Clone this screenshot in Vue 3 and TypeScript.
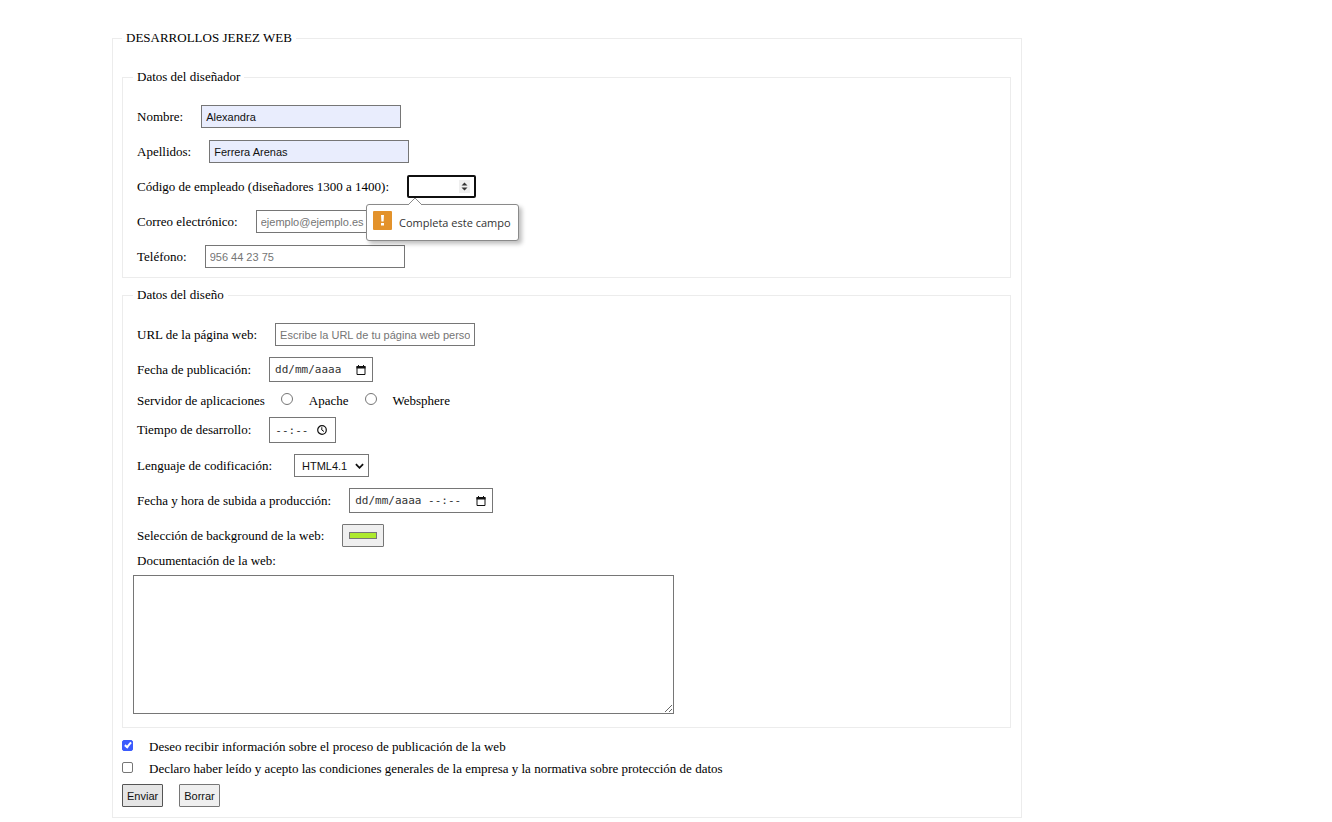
<script setup lang="ts">
import { ref } from 'vue'

const nombre = ref('Alexandra')
const apellidos = ref('Ferrera Arenas')
const codigo = ref('')
const correo = ref('')
const telefono = ref('')
const url = ref('')
const fecha = ref('')
const servidor = ref('')
const tiempo = ref('')
const lenguaje = ref('HTML4.1')
const subida = ref('')
const fondo = ref('#adea2e')
const documentacion = ref('')
const recibir = ref(true)
const acepto = ref(false)
</script>

<template>
  <form class="page" novalidate @submit.prevent>
    <fieldset class="outer">
      <legend>DESARROLLOS JEREZ WEB</legend>

      <fieldset class="group">
        <legend>Datos del diseñador</legend>
        <div class="rows">
          <div class="row">
            <label for="nombre">Nombre:</label>
            <input id="nombre" v-model="nombre" class="field filled" type="text" />
          </div>
          <div class="row">
            <label for="apellidos">Apellidos:</label>
            <input id="apellidos" v-model="apellidos" class="field filled" type="text" />
          </div>
          <div class="row">
            <label for="codigo">Código de empleado (diseñadores 1300 a 1400):</label>
            <div class="code">
              <input id="codigo" v-model="codigo" class="field number" type="number" min="1300" max="1400" required />
              <svg class="spin" viewBox="0 0 11 13" aria-hidden="true">
                <rect width="11" height="13" fill="#efefef" />
                <path d="M2.500 5.500 5.500 2.500 8.500 5.500ZM2.500 7.500 5.500 10.500 8.500 7.500Z" fill="#333" />
              </svg>
              <div class="bubble" role="alert">
                <svg class="arrow" viewBox="0 0 14 8" aria-hidden="true">
                  <path d="M0 8 7 1 14 8" fill="#fff" stroke="#8a8a8a" />
                </svg>
                <svg class="warn" viewBox="0 0 19 19" aria-hidden="true">
                  <rect width="19" height="19" rx="1" fill="#e3922b" />
                  <path d="M8 4h3l-.4 6.500h-2.200zM8 12h3v2.500h-3z" fill="#fff" />
                </svg>
                <span>Completa este campo</span>
              </div>
            </div>
          </div>
          <div class="row">
            <label for="correo">Correo electrónico:</label>
            <input id="correo" v-model="correo" class="field" type="email" placeholder="ejemplo@ejemplo.es" />
          </div>
          <div class="row">
            <label for="telefono">Teléfono:</label>
            <input id="telefono" v-model="telefono" class="field" type="tel" placeholder="956 44 23 75" />
          </div>
        </div>
      </fieldset>

      <fieldset class="group design">
        <legend>Datos del diseño</legend>
        <div class="rows tight">
          <div class="row">
            <label for="url">URL de la página web:</label>
            <input id="url" v-model="url" class="field" type="url" placeholder="Escribe la URL de tu página web personal" />
          </div>
          <div class="row">
            <label for="fecha">Fecha de publicación:</label>
            <div class="picker date">
              <input id="fecha" v-model="fecha" type="text" placeholder="dd/mm/aaaa" />
              <button type="button" aria-label="Abrir calendario">
                <svg viewBox="0 0 10 10"><path d="M1 1.500h8v8H1z" fill="none" stroke="#111" /><path d="M.5 1h9v2.500h-9zM2 0h1v1H2zM7 0h1v1H7z" fill="#111" /></svg>
              </button>
            </div>
          </div>
          <div class="row radios" role="radiogroup" aria-labelledby="servidor">
            <span id="servidor" class="caption">Servidor de aplicaciones</span>
            <input id="apache" v-model="servidor" type="radio" name="servidor" value="apache" />
            <label for="apache">Apache</label>
            <input id="websphere" v-model="servidor" type="radio" name="servidor" value="websphere" />
            <label for="websphere">Websphere</label>
          </div>
          <div class="row">
            <label for="tiempo">Tiempo de desarrollo:</label>
            <div class="picker time">
              <input id="tiempo" v-model="tiempo" type="text" placeholder="--:--" />
              <button type="button" aria-label="Elegir hora">
                <svg viewBox="0 0 10 10"><circle cx="5" cy="5" r="4.300" fill="none" stroke="#111" stroke-width="1.200" /><path d="M4.800 2.200V5L7 6.500" fill="none" stroke="#111" /></svg>
              </button>
            </div>
          </div>
          <div class="row">
            <label for="lenguaje">Lenguaje de codificación:</label>
            <div class="choice">
              <select id="lenguaje" v-model="lenguaje">
                <option>HTML4.1</option>
                <option>HTML5</option>
              </select>
              <svg viewBox="0 0 10 6" aria-hidden="true"><path d="M1 1 5 5 9 1" fill="none" stroke="#111" stroke-width="2" /></svg>
            </div>
          </div>
          <div class="row">
            <label for="subida">Fecha y hora de subida a producción:</label>
            <div class="picker datetime">
              <input id="subida" v-model="subida" type="text" placeholder="dd/mm/aaaa --:--" />
              <button type="button" aria-label="Abrir calendario y hora">
                <svg viewBox="0 0 10 10"><path d="M1 1.500h8v8H1z" fill="none" stroke="#111" /><path d="M.5 1h9v2.500h-9zM2 0h1v1H2zM7 0h1v1H7z" fill="#111" /></svg>
              </button>
            </div>
          </div>
          <div class="row">
            <label for="fondo">Selección de background de la web:</label>
            <input id="fondo" v-model="fondo" class="color" type="color" />
          </div>
        </div>
        <label class="doc" for="documentacion">Documentación de la web:</label>
        <textarea id="documentacion" v-model="documentacion"></textarea>
      </fieldset>

      <div class="check">
        <input id="recibir" v-model="recibir" type="checkbox" />
        <label for="recibir">Deseo recibir información sobre el proceso de publicación de la web</label>
      </div>
      <div class="check">
        <input id="acepto" v-model="acepto" type="checkbox" />
        <label for="acepto">Declaro haber leído y acepto las condiciones generales de la empresa y la normativa sobre protección de datos</label>
      </div>
      <div class="actions">
        <button class="send" type="submit">Enviar</button>
        <button type="reset">Borrar</button>
      </div>
    </fieldset>
  </form>
</template>

<style>
body {
  margin: 0;
  background: #fff;
}
</style>

<style scoped>
* {
  box-sizing: border-box;
}
.page {
  padding: 30px 310px 3px 112px;
  font: 13px/16px 'Liberation Serif', 'Times New Roman', serif;
  color: #000;
}
fieldset {
  margin: 0;
  min-width: 0;
  border: 1px solid #ececec;
}
legend {
  padding: 0 4px;
}
.outer {
  padding: 23px 10px 10px 9px;
}
.group {
  padding: 20px 10px 9px;
}
.design {
  margin-top: 9px;
  padding-bottom: 13px;
}
.rows {
  display: flex;
  flex-direction: column;
  gap: 12px;
}
.tight {
  gap: 11px;
}
.row {
  display: flex;
  align-items: center;
  gap: 18px;
  padding-left: 4px;
}
label,
.caption {
  white-space: nowrap;
}
.field {
  width: 200px;
  height: 23px;
  margin: 0;
  padding: 0 4px;
  border: 1px solid #767676;
  border-radius: 0;
  outline: none;
  background: #fff;
  color: #111;
  font: 11px 'Liberation Sans', Arial, sans-serif;
}
.field::placeholder {
  color: #757575;
}
.filled {
  background: #e9edfd;
}
.code {
  position: relative;
  display: flex;
}
.number {
  width: 69px;
  border: 2px solid #101010;
  border-radius: 2px;
  appearance: textfield;
}
.number::-webkit-inner-spin-button {
  appearance: none;
}
.spin {
  position: absolute;
  right: 6px;
  top: 5px;
  width: 11px;
  height: 13px;
}
.bubble {
  position: absolute;
  z-index: 1;
  left: -41px;
  top: 29px;
  display: flex;
  align-items: center;
  gap: 7px;
  height: 37px;
  padding: 0 7px 0 6px;
  border: 1px solid #8a8a8a;
  border-radius: 3px;
  background: #fff;
  box-shadow: 3px 3px 4px rgba(0, 0, 0, 0.25);
  white-space: nowrap;
  color: #333;
  font: 11px/16px 'Open Sans', 'Noto Sans', sans-serif;
}
.arrow {
  position: absolute;
  left: 41px;
  top: -8px;
  width: 14px;
  height: 8px;
}
.warn {
  width: 19px;
  height: 19px;
  margin-bottom: 4px;
}
.picker {
  display: flex;
  align-items: center;
  height: 25px;
  padding: 0 6px 0 5px;
  border: 1px solid #767676;
  background: #fff;
}
.picker input {
  flex: 1;
  min-width: 0;
  padding: 0;
  border: 0;
  outline: none;
  background: none;
  color: #333;
  font: 11px 'DejaVu Sans Mono', 'Courier New', monospace;
}
.picker input::placeholder {
  color: #333;
}
.picker button {
  display: flex;
  padding: 0;
  border: 0;
  background: none;
}
.picker svg {
  width: 10px;
  height: 10px;
}
.date {
  width: 104px;
}
.time {
  width: 67px;
  height: 26px;
}
.time button {
  padding-right: 2px;
}
.datetime {
  width: 144px;
}
.radios {
  align-items: baseline;
  gap: 16px;
  margin-bottom: -3px;
}
input[type='radio'],
input[type='checkbox'] {
  flex: none;
  appearance: none;
  width: 11px;
  height: 11px;
  margin: 0;
  border: 1px solid #767676;
  background: #fff;
}
input[type='radio'] {
  width: 12px;
  height: 12px;
  border-radius: 50%;
}
input[type='radio']:checked {
  border: 4px solid #3b5bfd;
}
input[type='checkbox'] {
  border-radius: 2px;
}
input[type='checkbox']:checked {
  border-color: #3b5bfd;
  background: #3b5bfd;
}
input[type='checkbox']:checked::before {
  content: '';
  display: block;
  width: 2px;
  height: 5px;
  margin-left: 3px;
  border: solid #fff;
  border-width: 0 2px 2px 0;
  transform: rotate(40deg);
}
.choice {
  position: relative;
  margin-left: 4px;
}
.choice select {
  display: block;
  width: 75px;
  height: 23px;
  padding: 0 7px;
  appearance: none;
  border: 1px solid #767676;
  border-radius: 0;
  background: #fff;
  color: #111;
  font: 11px 'Liberation Sans', Arial, sans-serif;
}
.choice svg {
  position: absolute;
  right: 5px;
  top: 9px;
  width: 9px;
  height: 6px;
  pointer-events: none;
}
.color {
  width: 42px;
  height: 23px;
  padding: 3px 5px;
  border: 1px solid #767676;
  border-radius: 1px;
  background: #efefef;
}
.color::-webkit-color-swatch-wrapper {
  padding: 4px 1px;
}
.color::-webkit-color-swatch {
  border: 1px solid #777;
}
.doc {
  display: block;
  padding: 6px 4px;
}
textarea {
  display: block;
  width: 541px;
  max-width: 100%;
  height: 139px;
  margin: 0;
  padding: 2px 4px;
  border: 1px solid #767676;
  outline: none;
  font: 11px 'DejaVu Sans Mono', monospace;
}
.check {
  display: flex;
  align-items: baseline;
  gap: 16px;
  padding-top: 6px;
}
.check input {
  align-self: flex-start;
  margin-top: 1px;
}
.design + .check {
  padding-top: 11px;
}
.actions {
  display: flex;
  gap: 16px;
  padding-top: 7px;
}
.actions button {
  height: 23px;
  padding: 0 4px;
  border: 1px solid #767676;
  border-radius: 1px;
  background: #efefef;
  color: #111;
  font: 11px 'Liberation Sans', Arial, sans-serif;
}
.actions .send {
  border-color: #555;
  background: #e5e5e5;
}
</style>
